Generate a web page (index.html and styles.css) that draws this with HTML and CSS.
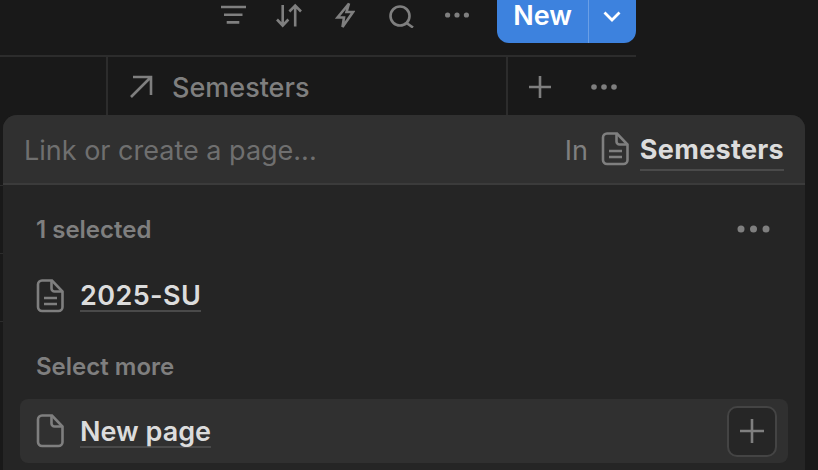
FILE: index.html
```html
<!DOCTYPE html>
<html>
  <head>
    <meta charset="utf-8">
    <link rel="stylesheet" href="styles.css">
  </head>
  <body>
    <div class="toolbar">
      <svg class="tool tool-filter" width="26" height="22" viewBox="0 0 26 22"><path d="M0 3h25M3 10.700h18.500M5.700 18.400h12.600"/></svg>
      <svg class="tool tool-sort" width="28" height="26" viewBox="0 0 28 26"><path d="M6.700 3v20.500M1 17.500l5.700 6 5.700-6"/><path d="M19.200 24.500V3.500M13.400 9.500l5.800-6 5.800 6"/></svg>
      <svg class="tool tool-bolt" width="20" height="28" viewBox="0 0 20 28"><path d="M14 2.500 2.500 16.500H9L7.500 26 18 11h-6.500L14 2.500Z"/></svg>
      <svg class="tool tool-search" width="26" height="26" viewBox="0 0 26 26"><circle cx="11" cy="14" r="9.500"/><path d="m17.500 21 6.500 4.500"/></svg>
      <svg class="tool tool-more" width="26" height="6" viewBox="0 0 26 6"><circle cx="3.600" cy="3" r="2.600" class="dot"/><circle cx="13" cy="3" r="2.600" class="dot"/><circle cx="22.400" cy="3" r="2.600" class="dot"/></svg>
      <div class="new-btn">
        <span class="new-label">New</span>
        <span class="new-arrow">
          <svg width="18" height="11" viewBox="0 0 18 11"><path d="m1.500 1.500 7.500 7.500 7.500-7.500"/></svg>
        </span>
      </div>
    </div>

    <div class="table-head">
      <div class="col-spacer"></div>
      <div class="col-title">
        <svg class="col-icon" width="24" height="24" viewBox="0 0 24 24"><path d="M2 22 21 3M4 2h18v18"/></svg>
        <span>Semesters</span>
      </div>
      <div class="col-actions">
        <svg width="24" height="24" viewBox="0 0 24 24"><path d="M12 1v22M1 12h22"/></svg>
        <svg width="26" height="6" viewBox="0 0 26 6"><circle cx="3" cy="3" r="2.800" class="dot"/><circle cx="13" cy="3" r="2.800" class="dot"/><circle cx="23" cy="3" r="2.800" class="dot"/></svg>
      </div>
    </div>

    <div class="row-lines">
      <div class="row-line"></div>
      <div class="row-line"></div>
      <div class="row-line"></div>
    </div>

    <div class="popup">
      <div class="popup-search">
        <span class="placeholder">Link or create a page...</span>
        <span class="scope">
          <span class="scope-in">In</span>
          <svg class="page-icon" width="28" height="34" viewBox="0 0 28 34"><path d="M6 1.500h10l10.500 11V28a4 4 0 0 1-4 4H6a4 4 0 0 1-4-4V5.500a4 4 0 0 1 4-4Z"/><path d="M15.500 2v7.500a3 3 0 0 0 3 3h8M8 19h13M8 25h13"/></svg>
          <span class="link-text scope-name">Semesters</span>
        </span>
      </div>
      <div class="popup-body">
        <div class="section-head">
          <span>1 selected</span>
          <svg class="section-more-icon" width="33" height="8" viewBox="0 0 33 8"><circle cx="4" cy="4" r="3.500" class="dot"/><circle cx="16.500" cy="4" r="3.500" class="dot"/><circle cx="29" cy="4" r="3.500" class="dot"/></svg>
        </div>
        <div class="item">
          <svg class="page-icon" width="28" height="34" viewBox="0 0 28 34"><path d="M6 1.500h10l10.500 11V28a4 4 0 0 1-4 4H6a4 4 0 0 1-4-4V5.500a4 4 0 0 1 4-4Z"/><path d="M15.500 2v7.500a3 3 0 0 0 3 3h8M8 19h13M8 25h13"/></svg>
          <span class="link-text semester-name">2025-SU</span>
        </div>
        <div class="section-head section-more">
          <span>Select more</span>
        </div>
        <div class="item item-active">
          <svg class="page-icon" width="28" height="34" viewBox="0 0 28 34"><path d="M6 1.500h10l10.500 11V28a4 4 0 0 1-4 4H6a4 4 0 0 1-4-4V5.500a4 4 0 0 1 4-4Z"/><path d="M15.500 2v7.500a3 3 0 0 0 3 3h8"/></svg>
          <span class="link-text">New page</span>
          <span class="add-btn">
            <svg width="24" height="24" viewBox="0 0 24 24"><path d="M12 0v24M0 12h24"/></svg>
          </span>
        </div>
      </div>
    </div>
  </body>
</html>
```

FILE: styles.css
```css
html, body {
  margin: 0;
  height: 100%;
  overflow: hidden;
}
body {
  background: #191919;
  font-family: Inter, "Liberation Sans", sans-serif;
  position: relative;
}
svg {
  display: block;
  fill: none;
  stroke: #7f7f7f;
  stroke-width: 2.6;
  flex: none;
}
svg .dot {
  fill: #7f7f7f;
  stroke: none;
}

.toolbar {
  display: flex;
  align-items: center;
  width: 416px;
  height: 43px;
  padding-bottom: 12px;
  padding-left: 221px;
}
.tool {
  margin-top: -14px;
}
.tool-filter { margin-right: 29px; }
.tool-sort { margin-right: 31px; }
.tool-bolt { margin-right: 34px; }
.tool-search { margin-right: 29px; }
.tool-more { margin-right: 27px; }

.new-btn {
  display: flex;
  width: 139px;
  height: 43px;
  background: #3d82de;
  border-radius: 0 0 12px 12px;
  color: #fff;
}
.new-label {
  width: 92px;
  height: 43px;
  padding-top: 1px;
  box-sizing: border-box;
  border-right: 1px solid #6a9fe6;
  font-size: 27px;
  font-weight: 600;
  line-height: 30px;
  text-align: center;
}
.new-arrow {
  flex: 1;
  display: flex;
  justify-content: center;
  padding: 11px 2px 0 0;
}
.new-arrow svg {
  stroke: #fff;
  stroke-width: 2.800;
}

.table-head {
  display: flex;
  width: 636px;
  height: 60px;
  border-top: 2px solid #2c2c2c;
}
.col-spacer {
  width: 106px;
  border-right: 2px solid #2c2c2c;
}
.col-title {
  display: flex;
  align-items: center;
  width: 400px;
  border-right: 2px solid #2c2c2c;
  color: #7f7f7f;
  font-size: 27px;
  font-weight: 500;
  box-sizing: border-box;
}
.col-icon {
  margin: 0 19px 0 21px;
}
.col-actions {
  display: flex;
  align-items: center;
  gap: 39px;
  padding-left: 20px;
}

.row-lines {
  position: absolute;
  top: 185px;
  left: 0;
  width: 3px;
}
.row-line {
  height: 68px;
  border-top: 1px solid #2c2c2c;
  box-sizing: border-box;
}

.popup {
  position: absolute;
  top: 115px;
  left: 3px;
  width: 802px;
  bottom: 0;
  background: #252525;
  border-radius: 14px 14px 0 0;
  overflow: hidden;
}
.popup-search {
  display: flex;
  justify-content: space-between;
  align-items: center;
  height: 68px;
  background: #303030;
  border-bottom: 2px solid #3b3b3b;
  padding: 0 21px;
  font-size: 27px;
}
.placeholder {
  color: #6f6f6f;
  padding-top: 2px;
}
.scope {
  display: flex;
  align-items: center;
}
.scope-in {
  color: #7f7f7f;
  margin-right: 13px;
  padding-top: 2px;
}
.link-text {
  color: #dcdcdc;
  font-weight: 600;
  font-size: 27px;
  line-height: 28px;
  border-bottom: 2px solid #4a4a4a;
}
.item .link-text {
  margin-top: 2px;
}
.item-active .link-text {
  margin-top: 4px;
}
.item .semester-name {
  letter-spacing: 0.4px;
}
.scope .scope-name {
  margin: 4px 0 0 11px;
  font-weight: 700;
  line-height: 38px;
  letter-spacing: 0.3px;
}

.popup-body {
  padding: 0 17px;
}
.section-head {
  display: flex;
  justify-content: space-between;
  align-items: center;
  height: 30px;
  padding: 0 16px;
  margin-top: 29px;
  color: #7f7f7f;
  font-size: 24px;
  font-weight: 600;
}
.section-more-icon {
  margin-right: 2px;
}
.section-more {
  margin-top: 23px;
}
.item {
  display: flex;
  align-items: center;
  gap: 16px;
  height: 64px;
  margin-top: 20px;
  padding: 0 11px 0 16px;
}
.item-active {
  background: #303030;
  border-radius: 8px;
  margin-top: 18px;
}
.add-btn {
  margin-left: auto;
  width: 50px;
  height: 51px;
  display: flex;
  align-items: center;
  justify-content: center;
  box-sizing: border-box;
  background: #262626;
  border: 2px solid #444;
  border-radius: 10px;
}
```
